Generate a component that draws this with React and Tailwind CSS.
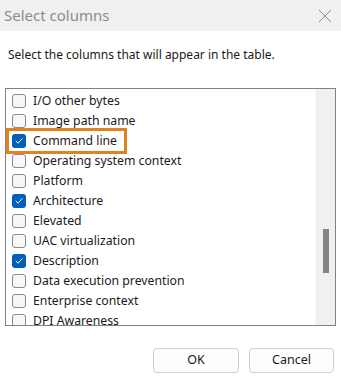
import { useState } from "react";

const rows = [
  { label: "I/O other bytes", checked: false },
  { label: "Image path name", checked: false },
  { label: "Command line", checked: true, focus: true },
  { label: "Operating system context", checked: false },
  { label: "Platform", checked: false },
  { label: "Architecture", checked: true },
  { label: "Elevated", checked: false },
  { label: "UAC virtualization", checked: false },
  { label: "Description", checked: true },
  { label: "Data execution prevention", checked: false },
  { label: "Enterprise context", checked: false },
  { label: "DPI Awareness", checked: false },
];

function Box({ checked }) {
  if (checked) {
    return (
      <span className="w-[14px] h-[14px] rounded-[3px] bg-[#005fb8] flex items-center justify-center shrink-0">
        <svg width="10" height="10" viewBox="0 0 10 10" fill="none">
          <path d="M2 5.2 L4.1 7.2 L8 2.8" stroke="white" strokeWidth="1" strokeLinecap="round" strokeLinejoin="round" />
        </svg>
      </span>
    );
  }
  return <span className="w-[14px] h-[14px] rounded-[3px] border border-[#8a8a8a] bg-[#f7f7f7] shrink-0" />;
}

export default function App() {
  const [items] = useState(rows);

  return (
    <div className="w-[341px] h-[380px] bg-white flex flex-col font-['Noto_Sans',sans-serif] text-[#1a1a1a] overflow-hidden">
      <div className="h-[31px] bg-[#f0f0f0] flex items-center justify-between pl-[4px] pr-[8px] shrink-0">
        <span className="text-[15px] text-[#8c8c8c]">Select columns</span>
        <svg width="14" height="14" viewBox="0 0 14 14" className="mr-[1px]">
          <path d="M1 1 L13 13 M13 1 L1 13" stroke="#8c8c8c" strokeWidth="1" />
        </svg>
      </div>

      <div className="px-[8px] pt-[15px] text-[12px] leading-[18px] shrink-0">
        Select the columns that will appear in the table.
      </div>

      <div className="mx-[5px] mt-[24px] h-[238px] border border-[#828282] flex overflow-hidden shrink-0">
        <div className="flex-1 pt-[2px] flex flex-col">
          {items.map(r => (
            <div key={r.label} className="relative h-[20px] flex items-center gap-[7px] pl-[6px] text-[12.25px] shrink-0">
              <Box checked={r.checked} />
              <span className="whitespace-nowrap">{r.label}</span>
              {r.focus && (
                <span className="absolute left-0 top-[-3px] w-[121px] h-[26px] border-[3px] border-[#e0821e]" />
              )}
            </div>
          ))}
        </div>
        <div className="w-[20px] bg-[#f0f0f0] border-l border-[#f7f7f7] relative shrink-0">
          <div className="absolute left-[7px] top-[140px] w-[6px] h-[44px] bg-[#858585]" />
        </div>
      </div>

      <div className="flex justify-end gap-[10px] pr-[7px] mt-[22px] shrink-0">
        <button className="w-[86px] h-[25px] rounded-[4px] border border-[#d0d0d0] bg-[#fdfdfd] text-[12.5px]">OK</button>
        <button className="w-[85px] h-[25px] rounded-[4px] border border-[#d0d0d0] bg-[#fdfdfd] text-[12.5px]">Cancel</button>
      </div>
    </div>
  );
}
